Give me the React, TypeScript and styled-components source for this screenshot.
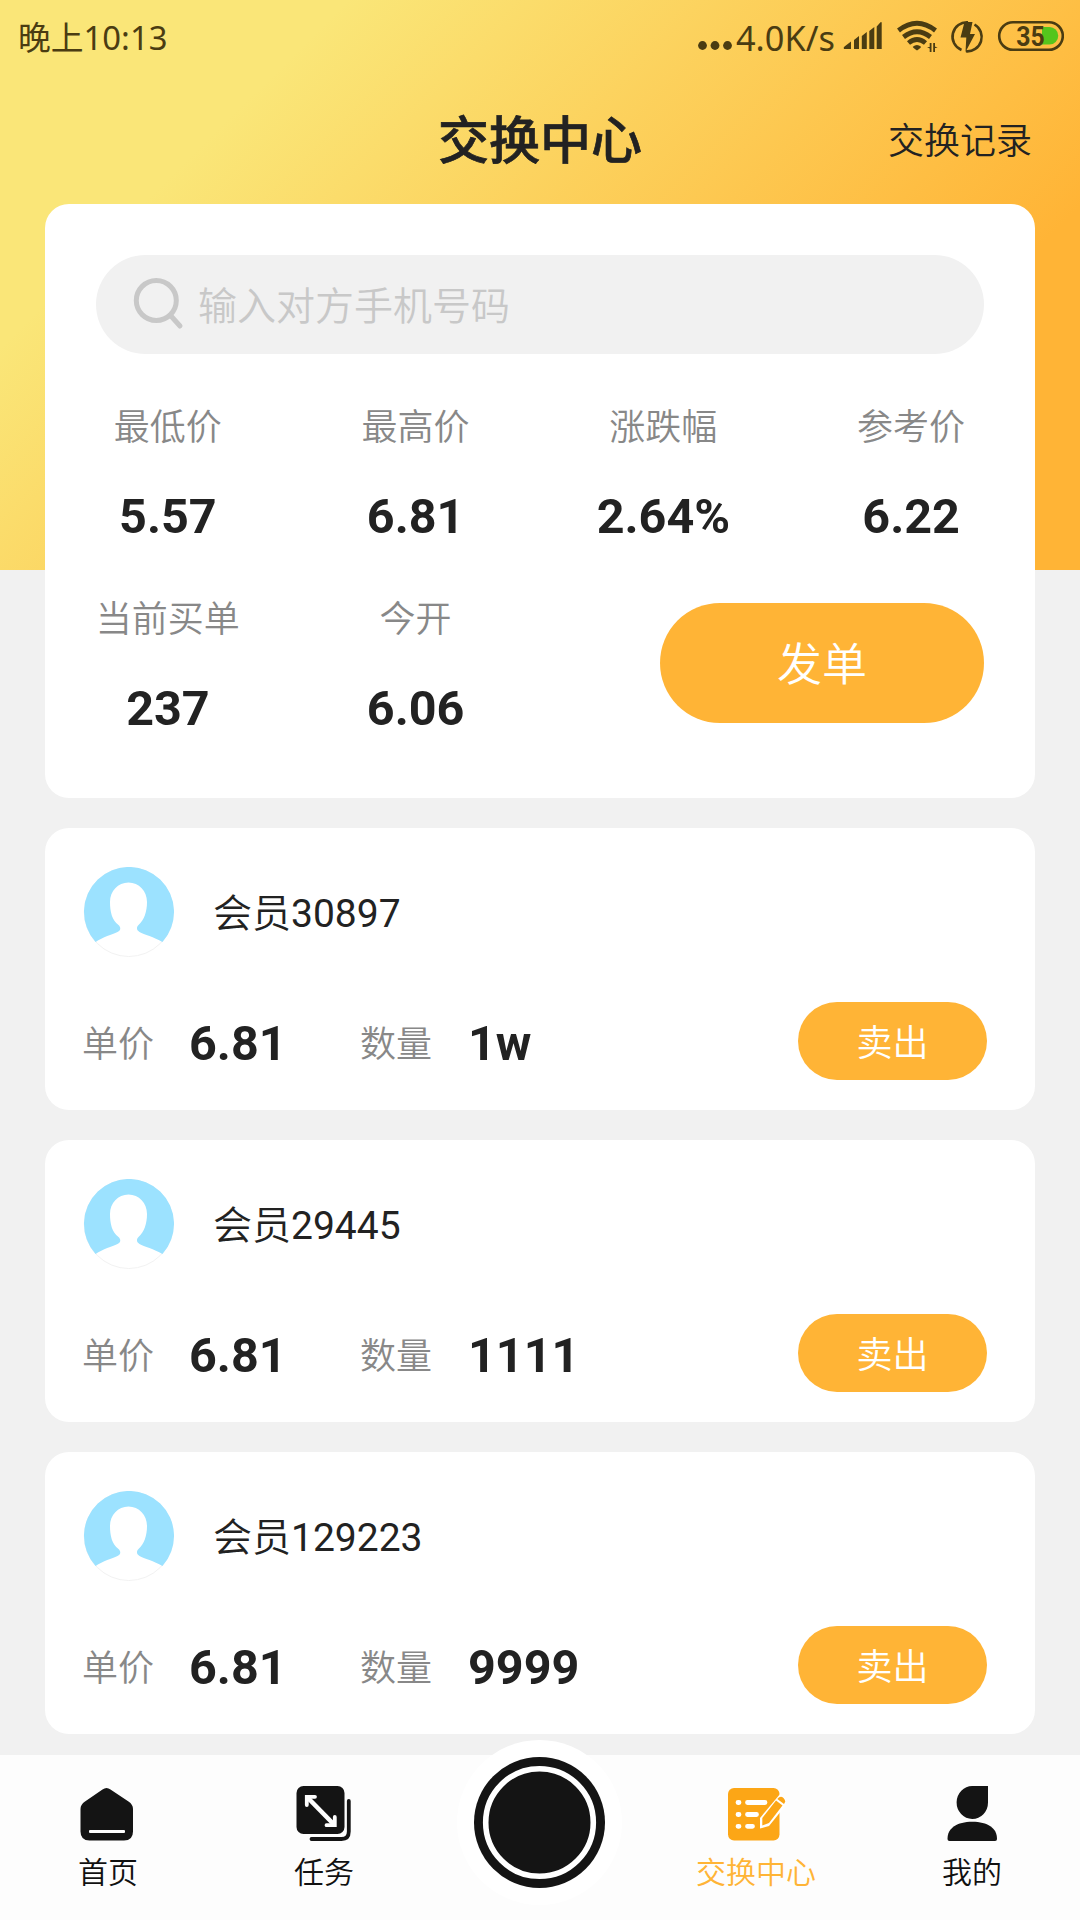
import React from "react";
import styled, { createGlobalStyle } from "styled-components";

const GlobalStyle = createGlobalStyle`
  * { box-sizing: border-box; }
  body {
    margin: 0;
    background: #f1f1f1;
    font-family: Roboto, "Noto Sans CJK SC", sans-serif;
    color: #222;
  }
`;

const Screen = styled.div`
  width: 1080px;
  height: 1920px;
  display: flex;
  flex-direction: column;
  overflow: hidden;
  background:
    linear-gradient(135deg, #fae678 21%, #ffb436 78%) 0 0 / 1080px 570px no-repeat,
    #f1f1f1;
`;

const StatusBar = styled.header`
  height: 75px;
  flex: none;
  display: flex;
  justify-content: space-between;
  align-items: center;
  padding: 0 16px 0 18px;
  color: #4a3c12;
  font-family: "Noto Sans", "Noto Sans CJK SC", sans-serif;
  font-size: 32.800px;
  line-height: 75px;
  white-space: nowrap;
`;

const Clock = styled.span`
  font-weight: 400;
`;

const StatusRight = styled.div`
  display: flex;
  align-items: center;
  height: 75px;
`;

const Speed = styled.span`
  width: 106px;
  margin-left: 4px;
  font-size: 34.300px;
`;

const TitleBar = styled.div`
  height: 129px;
  flex: none;
  display: grid;
  grid-template-columns: 1fr auto 1fr;
  align-items: center;
  padding: 5px 48px 0;
`;

const Title = styled.h1`
  grid-column: 2;
  margin: 0;
  font-size: 51px;
  line-height: 124px;
  font-weight: 500;
  -webkit-text-stroke: 0.7px #222;
`;

const HistoryLink = styled.a`
  justify-self: end;
  font-size: 36px;
  line-height: 124px;
  font-weight: 350;
`;

const Content = styled.main`
  flex: 1;
  min-height: 0;
  display: flex;
  flex-direction: column;
  gap: 30px;
  padding: 0 45px;
`;

const Card = styled.section`
  flex: none;
  border-radius: 24px;
  background: #fff;
`;

const SummaryCard = styled(Card)`
  height: 594px;
  padding-top: 51px;
`;

const SearchField = styled.div`
  height: 99px;
  margin: 0 51px;
  padding-left: 35px;
  border-radius: 50px;
  background: #f1f1f1;
  display: flex;
  align-items: center;
`;

const Placeholder = styled.span`
  margin-left: 13px;
  padding-top: 6px;
  font-size: 39px;
  line-height: 93px;
  font-weight: 350;
  color: #c8c8c8;
`;

const StatGrid = styled.div`
  display: grid;
  grid-template-columns: repeat(4, 1fr);
  grid-auto-rows: 192px;
  margin: 47px 0 0 -1px;
`;

const Stat = styled.div`
  display: flex;
  flex-direction: column;
  align-items: center;
`;

const StatLabel = styled.span`
  font-size: 36px;
  line-height: 54px;
  font-weight: 350;
  color: #888;
`;

const StatValue = styled.span`
  margin-top: 32px;
  font-size: 48.500px;
  line-height: 60px;
  font-weight: 700;
`;

const ActionCell = styled.div`
  grid-column: span 2;
  display: flex;
  justify-content: flex-end;
  padding: 10px 51px 0 0;
`;

const PillButton = styled.button<{ $large?: boolean }>`
  flex: none;
  width: ${(p) => (p.$large ? 324 : 189)}px;
  height: ${(p) => (p.$large ? 120 : 78)}px;
  padding: 5px 0 0;
  border: 0;
  border-radius: 60px;
  background: #ffb436;
  color: #fff;
  font-family: inherit;
  font-weight: 350;
  font-size: ${(p) => (p.$large ? 45 : 36)}px;
  line-height: 1;
`;

const OrderCard = styled(Card)`
  height: 282px;
  padding: 39px 48px 30px 38px;
  display: flex;
  flex-direction: column;
  justify-content: space-between;
`;

const Member = styled.div`
  display: flex;
  align-items: center;
  height: 90px;
`;

const MemberName = styled.span`
  margin-left: 39px;
  padding-top: 4px;
  font-size: 39px;
  line-height: 86px;
`;

const MemberPrefix = styled.span`
  font-weight: 350;
`;

const OrderRow = styled.div`
  display: flex;
  align-items: center;
  height: 78px;
`;

const FieldLabel = styled.span`
  width: 107px;
  padding-top: 8px;
  margin-left: -1px;
  font-size: 36px;
  line-height: 70px;
  font-weight: 350;
  color: #888;
`;

const FieldValue = styled.span<{ $grow?: boolean }>`
  ${(p) => (p.$grow ? "flex: 1; padding-left: 1px;" : "width: 172px;")}
  padding-top: 6px;
  font-size: 48.500px;
  line-height: 72px;
  font-weight: 700;
`;

const NavBar = styled.nav`
  flex: none;
  height: 165px;
  display: grid;
  grid-template-columns: repeat(5, 1fr);
  background: #fdfdfd;
`;

const NavItem = styled.a<{ $active?: boolean }>`
  display: flex;
  flex-direction: column;
  align-items: center;
  padding-top: 27px;
  font-size: 30px;
  line-height: 40px;
  font-weight: 350;
  color: ${(p) => (p.$active ? "#ffb436" : "#111")};
`;

const NavText = styled.span`
  margin-top: 11px;
`;

const ScanButton = styled.div`
  justify-self: center;
  width: 165px;
  height: 165px;
  margin: -15px 1px 0 0;
  border-radius: 50%;
  background: #fff;
  display: flex;
  align-items: center;
  justify-content: center;
`;

const DotsIcon = () => (
  <svg width="34" height="75" viewBox="0 0 34 75" fill="#4a3c12">
    <circle cx="4.5" cy="45.5" r="4.4" />
    <circle cx="17" cy="45.5" r="4.4" />
    <circle cx="29.5" cy="45.5" r="4.4" />
  </svg>
);

const StatusIcons = () => (
  <svg width="222" height="75" viewBox="842 0 222 75" fill="#4a3c12">
    <path d="M844 49Q843 47.500 844.500 46.500L851 41.500V49zM854 49v-9l5-4v13zM861.800 49v-13l5-4v17zM869.300 49v-18l5-4v22zM876.700 49v-22.500l3.800-4.200q1-.8 1.200.5v26.200z" />
    <g fill="none" stroke="#4a3c12" strokeWidth="4.800">
      <path d="M898.500 30.500Q917 16 935.500 30.500" />
      <path d="M903.500 37Q917 26.500 930.500 37" />
      <path d="M908.500 43Q917 36 925.500 43" />
    </g>
    <path d="M912.800 46.800Q917 43.200 921 46.800Q921 48 917 50.600Q913 48 912.800 46.800z" />
    <path d="M931.500 43v9h-1.800v-3.500l-2.700-1.500h2.700v-4zM933.200 52v-9h1.800v3.500l2.700 1.500h-2.700v4z" />
    <g fill="none" stroke="#4a3c12" strokeWidth="2.600">
      <path d="M968 22.300A14.400 14.400 0 0 0 961.500 50" />
      <path d="M974.500 24.500A14.400 14.400 0 0 1 966 51.300" />
    </g>
    <path d="M964.500 22h8l-2.500 12h5l-9.500 18 .8-14.500h-5.800z" />
    <path d="M1042 27h7.500a8.750 8.750 0 0 1 0 17.500h-7.500z" fill="#55c51c" />
    <rect x="999.200" y="22.200" width="63.600" height="27.600" rx="13.800" fill="none" stroke="#4a3c12" strokeWidth="2.600" />
    <text x="1016.300" y="45.500" fontFamily="Roboto, sans-serif" fontWeight="700" fontSize="27" textLength="28.500" lengthAdjust="spacingAndGlyphs">35</text>
  </svg>
);

const SearchIcon = () => (
  <svg width="54" height="54" viewBox="0 0 54 54" fill="none" stroke="#c8c8c8" strokeWidth="5" strokeLinecap="round">
    <circle cx="25.300" cy="22.500" r="20" />
    <path d="M40 38L49 48" />
  </svg>
);

const Avatar = () => (
  <svg width="91" height="90" viewBox="0 0 91 90">
    <circle cx="45.800" cy="45" r="44.500" fill="#fff" stroke="#f2f2f2" />
    <path
      fill="#9ce2ff"
      d="M12.500 75A45 45 0 1 1 79.500 75C71 70 61 67.500 56.500 65C53 63 53.500 60 55.500 58C61 53 64 45 64 35C64 24 56 15.500 45.500 15.500S27 24 27 35C27 45 29 53 35.500 58C38 60.500 38 63 34.500 65C29 67.500 20 70 12.500 75Z"
    />
  </svg>
);

const HomeIcon = () => (
  <svg width="60" height="60" viewBox="78 1782 60 60">
    <path
      fill="#141414"
      d="M102.500 1789.500Q106.500 1786.500 110.500 1789.500L128.500 1801.500Q133 1804.500 133 1809V1831.500Q133 1840.500 124 1840.500H89.500Q80.500 1840.500 80.500 1831.500V1809Q80.500 1804.500 85 1801.500Z"
    />
    <rect x="89" y="1830" width="36" height="3" rx="1" fill="#fff" />
  </svg>
);

const TaskIcon = () => (
  <svg width="60" height="60" viewBox="294 1782 60 60" fill="none">
    <rect x="296.500" y="1786" width="48" height="48" rx="7" fill="#141414" />
    <path d="M348.800 1801V1831.500Q348.800 1839 341.500 1839H311.500" stroke="#141414" strokeWidth="3.800" strokeLinecap="round" />
    <path d="M308 1798L333.500 1824" stroke="#fff" strokeWidth="4.600" />
    <path d="M306.800 1805V1796.800H315M326.500 1825.200H334.800V1817" stroke="#fff" strokeWidth="3.800" strokeLinecap="round" />
  </svg>
);

const ExchangeIcon = () => (
  <svg width="60" height="60" viewBox="726 1782 60 60" fill="none">
    <rect x="728" y="1788" width="51.500" height="52.500" rx="6" fill="#fca616" />
    <g stroke="#fff" strokeWidth="4.800" strokeLinecap="round">
      <path d="M738 1802.500h1M738 1814.500h1M738 1826.300h1M747.500 1802.500h17.500M747.500 1814.500h9M747.500 1826.300h5" />
    </g>
    <path d="M780.500 1793.500L760 1818V1828.500L769 1826L788 1802.500Z" fill="#fff" />
    <path d="M776 1800.500L762.300 1818V1825.500L769 1823L782.500 1805.500Z" fill="#fca616" />
    <path d="M777.300 1799Q780.500 1795 783.500 1798T784 1804Z" fill="#fca616" />
  </svg>
);

const ProfileIcon = () => (
  <svg width="60" height="60" viewBox="942 1782 60 60" fill="#141414">
    <path d="M972.500 1786H988V1802.500A15.700 16.500 0 1 1 972.500 1786Z" />
    <path d="M947.500 1839C947.500 1828 957 1821.800 972.300 1821.800S997 1828 997 1839Q997 1841 995 1841H949.500Q947.500 1841 947.500 1839Z" />
  </svg>
);

const ScanIcon = () => (
  <svg width="131" height="131" viewBox="0 0 131 131">
    <circle cx="65.500" cy="65.500" r="65.500" fill="#141414" />
    <circle cx="65.500" cy="65.500" r="53.800" fill="none" stroke="#fff" strokeWidth="5.600" />
  </svg>
);

const stats = [
  ["最低价", "5.57"],
  ["最高价", "6.81"],
  ["涨跌幅", "2.64%"],
  ["参考价", "6.22"],
  ["当前买单", "237"],
  ["今开", "6.06"],
];

const orders = [
  { member: "30897", price: "6.81", amount: "1w" },
  { member: "29445", price: "6.81", amount: "1111" },
  { member: "129223", price: "6.81", amount: "9999" },
];

export default function App() {
  return (
    <Screen>
      <GlobalStyle />
      <StatusBar>
        <Clock>晚上10:13</Clock>
        <StatusRight>
          <DotsIcon />
          <Speed>4.0K/s</Speed>
          <StatusIcons />
        </StatusRight>
      </StatusBar>
      <TitleBar>
        <Title>交换中心</Title>
        <HistoryLink>交换记录</HistoryLink>
      </TitleBar>
      <Content>
        <SummaryCard>
          <SearchField>
            <SearchIcon />
            <Placeholder>输入对方手机号码</Placeholder>
          </SearchField>
          <StatGrid>
            {stats.map(([label, value]) => (
              <Stat key={label}>
                <StatLabel>{label}</StatLabel>
                <StatValue>{value}</StatValue>
              </Stat>
            ))}
            <ActionCell>
              <PillButton $large>发单</PillButton>
            </ActionCell>
          </StatGrid>
        </SummaryCard>
        {orders.map((order) => (
          <OrderCard key={order.member}>
            <Member>
              <Avatar />
              <MemberName>
                <MemberPrefix>会员</MemberPrefix>
                {order.member}
              </MemberName>
            </Member>
            <OrderRow>
              <FieldLabel>单价</FieldLabel>
              <FieldValue>{order.price}</FieldValue>
              <FieldLabel>数量</FieldLabel>
              <FieldValue $grow>{order.amount}</FieldValue>
              <PillButton>卖出</PillButton>
            </OrderRow>
          </OrderCard>
        ))}
      </Content>
      <NavBar>
        <NavItem>
          <HomeIcon />
          <NavText>首页</NavText>
        </NavItem>
        <NavItem>
          <TaskIcon />
          <NavText>任务</NavText>
        </NavItem>
        <ScanButton>
          <ScanIcon />
        </ScanButton>
        <NavItem $active>
          <ExchangeIcon />
          <NavText>交换中心</NavText>
        </NavItem>
        <NavItem>
          <ProfileIcon />
          <NavText>我的</NavText>
        </NavItem>
      </NavBar>
    </Screen>
  );
}
